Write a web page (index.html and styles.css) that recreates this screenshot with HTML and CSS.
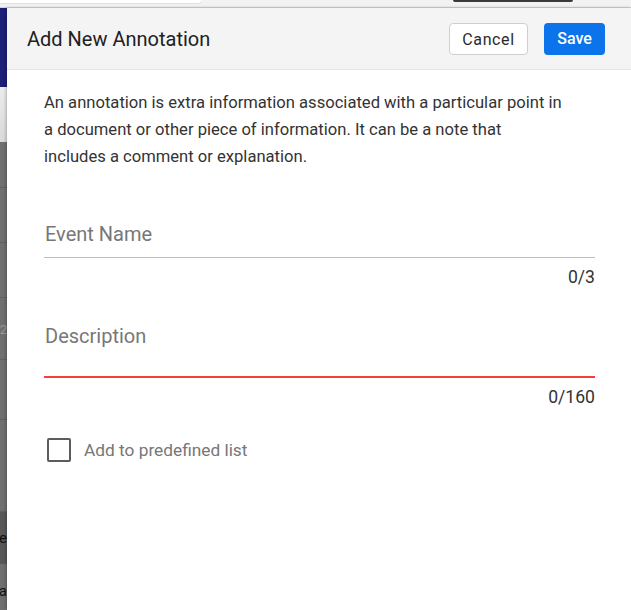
FILE: index.html
```html
<!DOCTYPE html>
<html lang="en">
<head>
    <meta charset="UTF-8">
    <meta name="viewport" content="width=device-width, initial-scale=1.0">
    <title>Add New Annotation</title>
    <link rel="stylesheet" href="styles.css">
</head>
<body>

    <!-- page behind the drawer -->
    <div class="topbar">
        <div class="topbar-search"></div>
        <div class="topbar-pill"></div>
    </div>

    <div class="layout">
        <div class="backdrop">
            <div class="bd-nav"></div>
            <div class="bd-head"></div>
            <div class="bd-row bd-r1"></div>
            <div class="bd-row bd-r2"></div>
            <div class="bd-row bd-r3"></div>
            <div class="bd-row bd-r4"><span class="bd-text bd-light">1/2</span></div>
            <div class="bd-row bd-r5"></div>
            <div class="bd-row bd-r6"></div>
            <div class="bd-row bd-dark"><span class="bd-text">Title</span></div>
            <div class="bd-row bd-last"><span class="bd-text">Ala</span></div>
        </div>

        <div class="drawer">
            <div class="drawer-header">
                <h2>Add New Annotation</h2>
                <div class="actions">
                    <button type="button" class="btn btn-cancel">Cancel</button>
                    <button type="button" class="btn btn-save">Save</button>
                </div>
            </div>

            <form class="drawer-body" id="annotationForm">
                <p class="intro">An annotation is extra information associated with a particular point in a document or other piece of information. It can be a note that includes a comment or explanation.</p>

                <div class="field">
                    <input type="text" id="eventName" class="field-input" placeholder="Event Name" maxlength="3">
                    <div class="counter">0/3</div>
                </div>

                <div class="field field-desc">
                    <textarea id="description" class="field-input field-area field-error" placeholder="Description" maxlength="160"></textarea>
                    <div class="counter">0/160</div>
                </div>

                <label class="check">
                    <input type="checkbox" id="predefined">
                    <span class="check-box"></span>
                    <span class="check-label">Add to predefined list</span>
                </label>
            </form>
        </div>
    </div>

</body>
</html>
```

FILE: styles.css
```css
* {
    box-sizing: border-box;
}
body {
    margin: 0;
    font-family: Roboto, "Liberation Sans", Arial, sans-serif;
    background: #f2f2f2;
    width: 631px;
    height: 610px;
    overflow: hidden;
}

/* strip of the page showing above the drawer */
.topbar {
    height: 8px;
    background: #f2f2f2;
    border-bottom: 1px solid #d2d2d2;
    display: flex;
    overflow: hidden;
}
.topbar-search {
    width: 201px;
    height: 3px;
    background: #fff;
    border-radius: 0 0 6px 0;
    box-shadow: 0 1px 1px rgba(0, 0, 0, 0.08);
}
.topbar-pill {
    width: 120px;
    height: 2px;
    margin-left: 252px;
    background: #3a3a3a;
    border-radius: 0 0 6px 6px;
}

.layout {
    display: flex;
    height: 602px;
}

/* dimmed page on the left */
.backdrop {
    width: 7px;
    flex-shrink: 0;
    display: flex;
    flex-direction: column;
    background: #6f6f6f;
}
.bd-nav {
    height: 79px;
    background: #1b1f78;
}
.bd-head {
    height: 55px;
    background: linear-gradient(#ececec, #d9d9d9);
}
.bd-row {
    border-bottom: 1px solid #616161;
    overflow: hidden;
    display: flex;
    align-items: center;
    justify-content: flex-end;
}
.bd-r1 { height: 46px; }
.bd-r2 { height: 55px; }
.bd-r3 { height: 55px; }
.bd-r4 { height: 62px; align-items: flex-start; padding-top: 24px; }
.bd-r5 { height: 60px; }
.bd-r6 { height: 92px; }
.bd-dark {
    height: 52px;
    background: #585858;
    border-bottom: none;
}
.bd-last {
    flex: 1;
    border-bottom: none;
    align-items: flex-start;
    padding-top: 18px;
}
.bd-text {
    white-space: nowrap;
    font-size: 15px;
    color: #111;
}
.bd-light {
    color: #9a9a9a;
    font-size: 13px;
}

/* drawer */
.drawer {
    flex: 1;
    background: #fff;
    box-shadow: -1px 0 3px rgba(0, 0, 0, 0.25);
    display: flex;
    flex-direction: column;
}
.drawer-header {
    height: 62px;
    background: #f4f4f4;
    border-bottom: 1px solid #e4e4e4;
    display: flex;
    align-items: center;
    justify-content: space-between;
    padding: 0 26px 0 20px;
}
.drawer-header h2 {
    margin: 0;
    font-size: 20px;
    font-weight: 400;
    color: #212121;
}
.actions {
    display: flex;
    gap: 16px;
}
.btn {
    height: 32px;
    font-family: inherit;
    font-size: 16px;
    border-radius: 4px;
    cursor: pointer;
}
.btn-cancel {
    width: 79px;
    background: #fff;
    border: 1px solid #cfcfcf;
    color: #2a2a2a;
    letter-spacing: 0.6px;
    padding-top: 3px;
}
.btn-save {
    width: 61px;
    background: #0b74ea;
    border: none;
    color: #fff;
    font-weight: 500;
    padding-bottom: 2px;
}

.drawer-body {
    padding: 19px 36px 0 37px;
}
.intro {
    margin: 0;
    padding-right: 28px;
    font-size: 16.6px;
    line-height: 27px;
    color: #333;
}

.field {
    margin-top: 41px;
}
.field-desc {
    margin-top: 26px;
}
.field-input {
    display: block;
    width: 100%;
    height: 47px;
    padding: 0 0 1px 1px;
    border: none;
    border-bottom: 1px solid #bdbdbd;
    font-family: inherit;
    font-size: 20px;
    color: #333;
    outline: none;
    background: transparent;
}
.field-input::placeholder {
    color: #777;
}
.field-area {
    height: 65px;
    padding-top: 11px;
    resize: none;
    line-height: 24px;
}
.field-error {
    border-bottom: 2px solid #f44336;
}
.counter {
    margin-top: 9px;
    text-align: right;
    font-size: 17.6px;
    line-height: 20px;
    color: #333;
}

.check {
    margin-top: 31px;
    display: flex;
    align-items: center;
    gap: 13px;
    cursor: pointer;
    padding-left: 3px;
}
.check input {
    display: none;
}
.check-box {
    width: 24px;
    height: 24px;
    border: 2px solid #5c5c5c;
    border-radius: 2px;
}
.check-label {
    font-size: 17.3px;
    color: #777;
}
```
